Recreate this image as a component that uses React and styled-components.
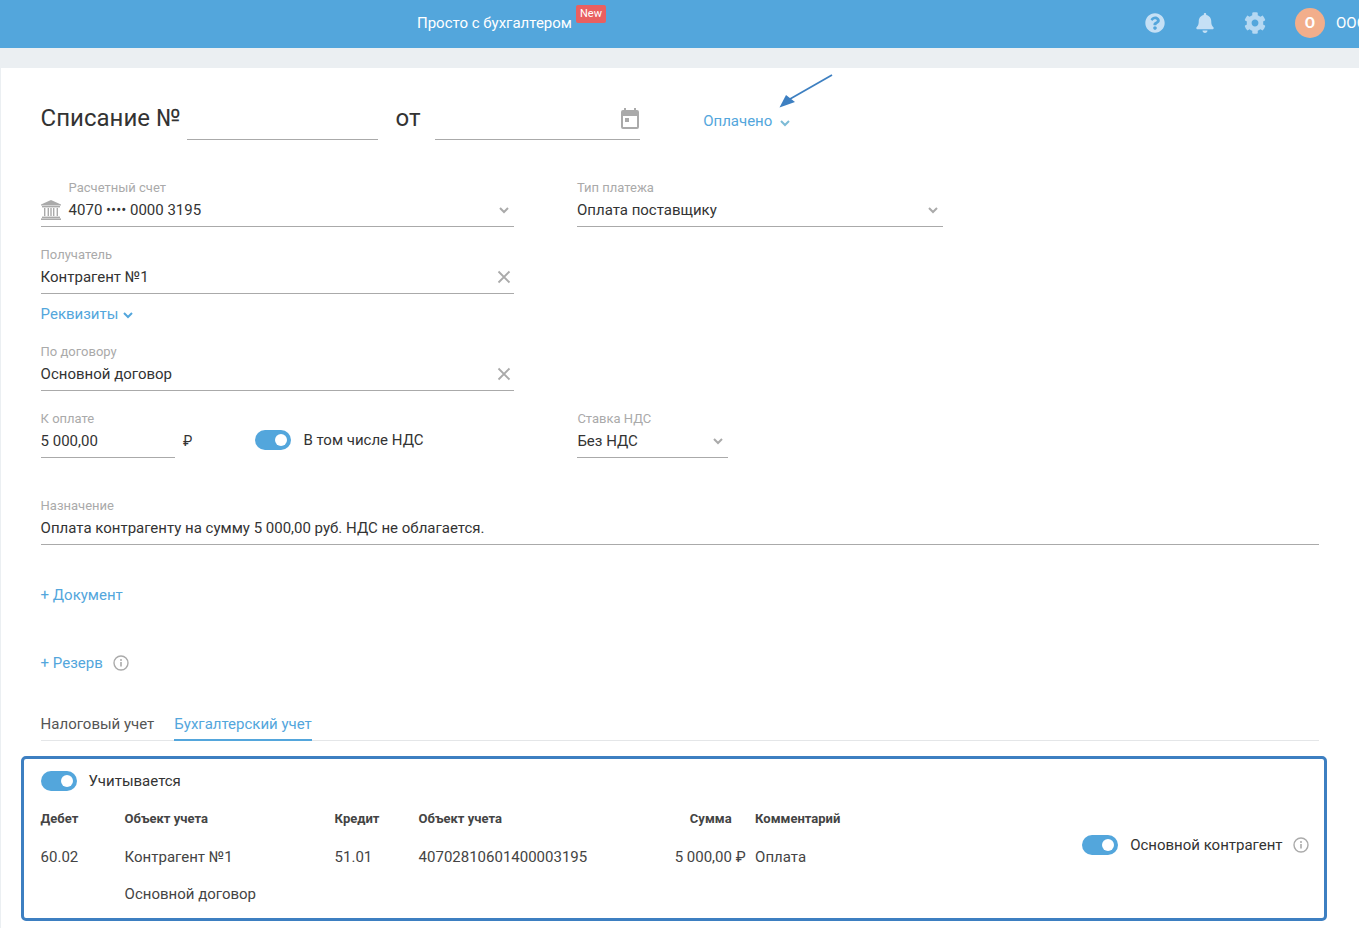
import React from "react";
import styled, { createGlobalStyle } from "styled-components";
import { FaQuestionCircle, FaBell, FaCog } from "react-icons/fa";

const GlobalStyle = createGlobalStyle`
  html, body {
    margin: 0;
    padding: 0;
    height: 100%;
    overflow: hidden;
    background: #ebeff2;
    font-family: Roboto, "Liberation Sans", sans-serif;
    color: #333;
  }
`;

const Header = styled.header`
  height: 48px;
  background: #53a6dc;
  display: flex;
  align-items: center;
  padding-left: 417px;
  overflow: hidden;
  white-space: nowrap;
`;

const Brand = styled.span`
  color: #fff;
  font-size: 15px;
  line-height: 20px;
  margin-top: -2px;
`;

const NewBadge = styled.span`
  width: 30px;
  height: 18px;
  margin: -20px 0 0 4px;
  border-radius: 2px;
  background: #e96060;
  color: #fff;
  font-size: 11px;
  line-height: 17px;
  text-align: center;
`;

const HeaderTools = styled.div`
  margin-left: auto;
  margin-top: -2px;
  display: flex;
  align-items: center;
  width: 229px;
  flex: none;
`;

const ToolIcon = styled.span`
  width: 50px;
  height: 22px;
  flex: none;
  display: flex;
  align-items: center;
  justify-content: center;
  color: ${(p) => p.$color || "#c5e0f5"};
  font-size: ${(p) => p.$size || 20}px;
`;

const Avatar = styled.span`
  width: 30px;
  height: 30px;
  flex: none;
  margin-left: 15px;
  border-radius: 50%;
  background: #f2ae8b;
  color: #fff;
  font-size: 15px;
  font-weight: 700;
  line-height: 30px;
  text-align: center;
`;

const CompanyName = styled.span`
  color: #fff;
  font-size: 15px;
  margin-left: 11px;
  flex: none;
  width: 23px;
  overflow: hidden;
`;

const Card = styled.main`
  position: relative;
  margin: 20px 0 0 1px;
  height: 860px;
  box-sizing: border-box;
  padding: 32px 40px 0 39.6px;
  background: #fff;
  overflow: hidden;
`;

const TitleRow = styled.div`
  display: flex;
  align-items: flex-start;
  height: 40px;
`;

const Title = styled.h1`
  margin: 3px 0 0;
  padding-left: ${(p) => p.$indent || 0}px;
  box-sizing: border-box;
  font-size: 24px;
  font-weight: 400;
  line-height: 30px;
  color: #333;
  width: ${(p) => p.$width}px;
  flex: none;
`;

const BlankInput = styled.div`
  width: ${(p) => p.$width}px;
  height: 40px;
  box-sizing: border-box;
  border-bottom: 1px solid #aaa;
  flex: none;
  display: flex;
  align-items: center;
  justify-content: flex-end;
  padding-bottom: 2px;
`;

const StatusLink = styled.span`
  display: flex;
  align-items: center;
  gap: 7px;
  margin: 11px 0 0 63.6px;
  font-size: 15px;
  line-height: 20px;
  color: #53a6dc;
  & > svg {
    margin-top: 3px;
  }
`;

const ArrowMark = styled.svg`
  position: absolute;
  left: 778px;
  top: 5px;
`;

const Row = styled.div`
  display: flex;
  align-items: flex-start;
  margin-top: ${(p) => p.$top || 0}px;
`;

const Field = styled.div`
  width: ${(p) => (p.$width ? `${p.$width}px` : "100%")};
  height: 48px;
  box-sizing: border-box;
  border-bottom: 1px solid #aaa;
  flex: none;
  margin-right: ${(p) => p.$gap || 0}px;
`;

const Label = styled.div`
  font-size: 13px;
  line-height: 16px;
  padding-top: 1px;
  color: #aaa;
  padding-left: ${(p) => p.$indent || 0}px;
`;

const Value = styled.div`
  display: flex;
  align-items: center;
  height: 24px;
  margin-top: 2px;
  font-size: 15px;
  color: #333;
  white-space: nowrap;
`;

const BankSlot = styled.span`
  display: flex;
  width: 28px;
  flex: none;
`;

const TrailingIcon = styled.span`
  display: flex;
  margin-left: auto;
  margin-right: ${(p) => p.$right ?? 3}px;
`;

const TextLink = styled.div`
  display: flex;
  align-items: center;
  gap: ${(p) => p.$gap || 4}px;
  margin-top: ${(p) => p.$top || 0}px;
  height: 20px;
  font-size: 15px;
  color: #53a6dc;
`;

const DetailsChevron = styled.span`
  display: flex;
  margin-top: 2px;
`;

const Ruble = styled.span`
  margin: 21px 0 0 8.5px;
  width: 72.3px;
  flex: none;
  font-size: 14px;
  line-height: 20px;
`;

const Track = styled.span`
  display: block;
  position: relative;
  width: 36px;
  height: 20px;
  border-radius: 10px;
  background: #53a6dc;
  flex: none;
  &::after {
    content: "";
    position: absolute;
    right: 4px;
    top: 4px;
    width: 12px;
    height: 12px;
    border-radius: 50%;
    background: #fff;
  }
`;

const ToggleLine = styled.div`
  display: flex;
  align-items: center;
  gap: 12px;
  font-size: 15px;
  line-height: 20px;
  color: #333;
  margin-top: ${(p) => p.$top || 0}px;
  width: ${(p) => (p.$width ? `${p.$width}px` : "auto")};
  flex: none;
`;

const Tabs = styled.div`
  display: flex;
  gap: 20px;
  height: 35px;
  box-sizing: border-box;
  margin-top: 33px;
  border-bottom: 1px solid #e4e6e8;
`;

const Tab = styled.span`
  height: 35px;
  box-sizing: border-box;
  padding-top: 8px;
  font-size: 15px;
  line-height: 20px;
  color: ${(p) => (p.$active ? "#53a6dc" : "#555")};
  border-bottom: ${(p) => (p.$active ? "2px solid #53a6dc" : "0")};
`;

const AccountBox = styled.section`
  display: flex;
  align-items: flex-start;
  justify-content: space-between;
  height: 165px;
  box-sizing: border-box;
  margin: 15px 0 0 -20px;
  width: 1306px;
  padding: 12px 15px 0 17px;
  border: 3px solid #3d7fc1;
  border-radius: 5px;
`;

const EntryTable = styled.div`
  display: grid;
  grid-template-columns: 84px 210px 84px 210px 117px 120px;
  grid-template-rows: 20px 18px 20px 38px 37px;
  white-space: nowrap;
`;

const AccountedLine = styled(ToggleLine)`
  grid-column: 1 / -1;
  grid-row: 1;
`;

const HeadCell = styled.span`
  grid-row: 3;
  grid-column: ${(p) => p.$col};
  font-size: 13px;
  font-weight: 700;
  line-height: 20px;
  color: #444;
  text-align: ${(p) => (p.$right ? "right" : "left")};
  padding-right: ${(p) => (p.$right ? 14 : 0)}px;
`;

const Cell = styled.span`
  grid-row: ${(p) => p.$row};
  grid-column: ${(p) => p.$col};
  align-self: end;
  font-size: 15px;
  line-height: 20px;
  color: #444;
  text-align: ${(p) => (p.$right ? "right" : "left")};
`;

const CommentHead = styled(HeadCell)`
  margin-left: 9.5px;
`;

const CommentCell = styled(Cell)`
  margin-left: 9.5px;
`;

const MainPartner = styled(ToggleLine)`
  margin-top: 64px;
  & > svg {
    margin-left: -2px;
  }
`;

const Chevron = ({ color = "#aaa", size = 12 }) => (
  <svg width={size} height={size} viewBox="0 0 12 12" fill="none">
    <path d="M2 4l4 4 4-4" stroke={color} strokeWidth="2" />
  </svg>
);

const Cross = () => (
  <svg width="14" height="14" viewBox="0 0 14 14" fill="none">
    <path d="M1.5 1.5l11 11M12.5 1.5l-11 11" stroke="#aaa" strokeWidth="1.8" />
  </svg>
);

const Info = () => (
  <svg width="16" height="16" viewBox="0 0 16 16" fill="none">
    <circle cx="8" cy="8" r="7" stroke="#aaa" strokeWidth="1.4" />
    <circle cx="8" cy="4.9" r="1" fill="#aaa" />
    <path d="M8 7v4.6" stroke="#aaa" strokeWidth="1.6" />
  </svg>
);

const CalendarIcon = () => (
  <svg width="18" height="21" viewBox="0 0 18 21">
    <path
      d="M3 0h2v2h8V0h2v2h1a2 2 0 012 2v15a2 2 0 01-2 2H2a2 2 0 01-2-2V4a2 2 0 012-2h1zM2 8v11h14V8z"
      fill="#aaa"
      fillRule="evenodd"
    />
    <rect x="4" y="10" width="4" height="4" fill="#aaa" />
  </svg>
);

const BankIcon = () => (
  <svg width="20" height="20" viewBox="0 0 20 20" fill="#aaa">
    <path d="M10 0l10 4.5v1H0v-1z" />
    <rect x="1" y="6" width="18" height="1.4" />
    <rect x="3" y="8" width="1.4" height="8" />
    <rect x="6.6" y="8" width="1.4" height="8" />
    <rect x="12" y="8" width="1.4" height="8" />
    <rect x="15.6" y="8" width="1.4" height="8" />
    <rect x="9.3" y="8" width="1.4" height="8" />
    <rect x="1" y="16.6" width="18" height="1.4" />
    <rect x="0" y="18.4" width="20" height="1.6" />
  </svg>
);

export default function App() {
  return (
    <>
      <GlobalStyle />
      <Header>
        <Brand>Просто с бухгалтером</Brand>
        <NewBadge>New</NewBadge>
        <HeaderTools>
          <ToolIcon><FaQuestionCircle /></ToolIcon>
          <ToolIcon><FaBell /></ToolIcon>
          <ToolIcon $color="#b5d8f2" $size={22}><FaCog /></ToolIcon>
          <Avatar>О</Avatar>
          <CompanyName>ООО</CompanyName>
        </HeaderTools>
      </Header>
      <Card>
        <ArrowMark width="56" height="36" viewBox="0 0 56 36" fill="none">
          <path d="M53 2L11 26" stroke="#3d7fc1" strokeWidth="1.8" />
          <path d="M0.5 34.5L16 29 7 22z" fill="#3d7fc1" />
        </ArrowMark>
        <TitleRow>
          <Title $width={146}>Списание №</Title>
          <BlankInput $width={191} />
          <Title $width={57} $indent={18}>от</Title>
          <BlankInput $width={205}>
            <TrailingIcon $right={0.6}><CalendarIcon /></TrailingIcon>
          </BlankInput>
          <StatusLink>Оплачено <Chevron color="#7dbbd6" /></StatusLink>
        </TitleRow>

        <Row $top={39}>
          <Field $width={473} $gap={63.4}>
            <Label $indent={28}>Расчетный счет</Label>
            <Value>
              <BankSlot><BankIcon /></BankSlot>
              4070 •••• 0000 3195
              <TrailingIcon $right={4}><Chevron /></TrailingIcon>
            </Value>
          </Field>
          <Field $width={366}>
            <Label>Тип платежа</Label>
            <Value>Оплата поставщику<TrailingIcon $right={4}><Chevron /></TrailingIcon></Value>
          </Field>
        </Row>

        <Row $top={19}>
          <Field $width={473}>
            <Label>Получатель</Label>
            <Value>Контрагент №1<TrailingIcon><Cross /></TrailingIcon></Value>
          </Field>
        </Row>

        <TextLink $top={10}>Реквизиты <DetailsChevron><Chevron color="#53a6dc" /></DetailsChevron></TextLink>

        <Row $top={19}>
          <Field $width={473}>
            <Label>По договору</Label>
            <Value>Основной договор<TrailingIcon><Cross /></TrailingIcon></Value>
          </Field>
        </Row>

        <Row $top={19}>
          <Field $width={134}>
            <Label>К оплате</Label>
            <Value>5 000,00</Value>
          </Field>
          <Ruble>₽</Ruble>
          <ToggleLine $top={20} $width={322}>
            <Track />
            В том числе НДС
          </ToggleLine>
          <Field $width={151}>
            <Label>Ставка НДС</Label>
            <Value>Без НДС<TrailingIcon $right={4}><Chevron /></TrailingIcon></Value>
          </Field>
        </Row>

        <Row $top={39}>
          <Field>
            <Label>Назначение</Label>
            <Value>Оплата контрагенту на сумму 5 000,00 руб. НДС не облагается.</Value>
          </Field>
        </Row>

        <TextLink $top={40}>+ Документ</TextLink>
        <TextLink $top={48} $gap={10}>+ Резерв <Info /></TextLink>

        <Tabs>
          <Tab>Налоговый учет</Tab>
          <Tab $active>Бухгалтерский учет</Tab>
        </Tabs>

        <AccountBox>
          <EntryTable>
            <AccountedLine>
              <Track />
              Учитывается
            </AccountedLine>
            <HeadCell $col={1}>Дебет</HeadCell>
            <HeadCell $col={2}>Объект учета</HeadCell>
            <HeadCell $col={3}>Кредит</HeadCell>
            <HeadCell $col={4}>Объект учета</HeadCell>
            <HeadCell $col={5} $right>Сумма</HeadCell>
            <CommentHead $col={6}>Комментарий</CommentHead>
            <Cell $row={4} $col={1}>60.02</Cell>
            <Cell $row={4} $col={2}>Контрагент №1</Cell>
            <Cell $row={4} $col={3}>51.01</Cell>
            <Cell $row={4} $col={4}>40702810601400003195</Cell>
            <Cell $row={4} $col={5} $right>5 000,00 ₽</Cell>
            <CommentCell $row={4} $col={6}>Оплата</CommentCell>
            <Cell $row={5} $col={2}>Основной договор</Cell>
          </EntryTable>
          <MainPartner>
            <Track />
            Основной контрагент
            <Info />
          </MainPartner>
        </AccountBox>
      </Card>
    </>
  );
}
